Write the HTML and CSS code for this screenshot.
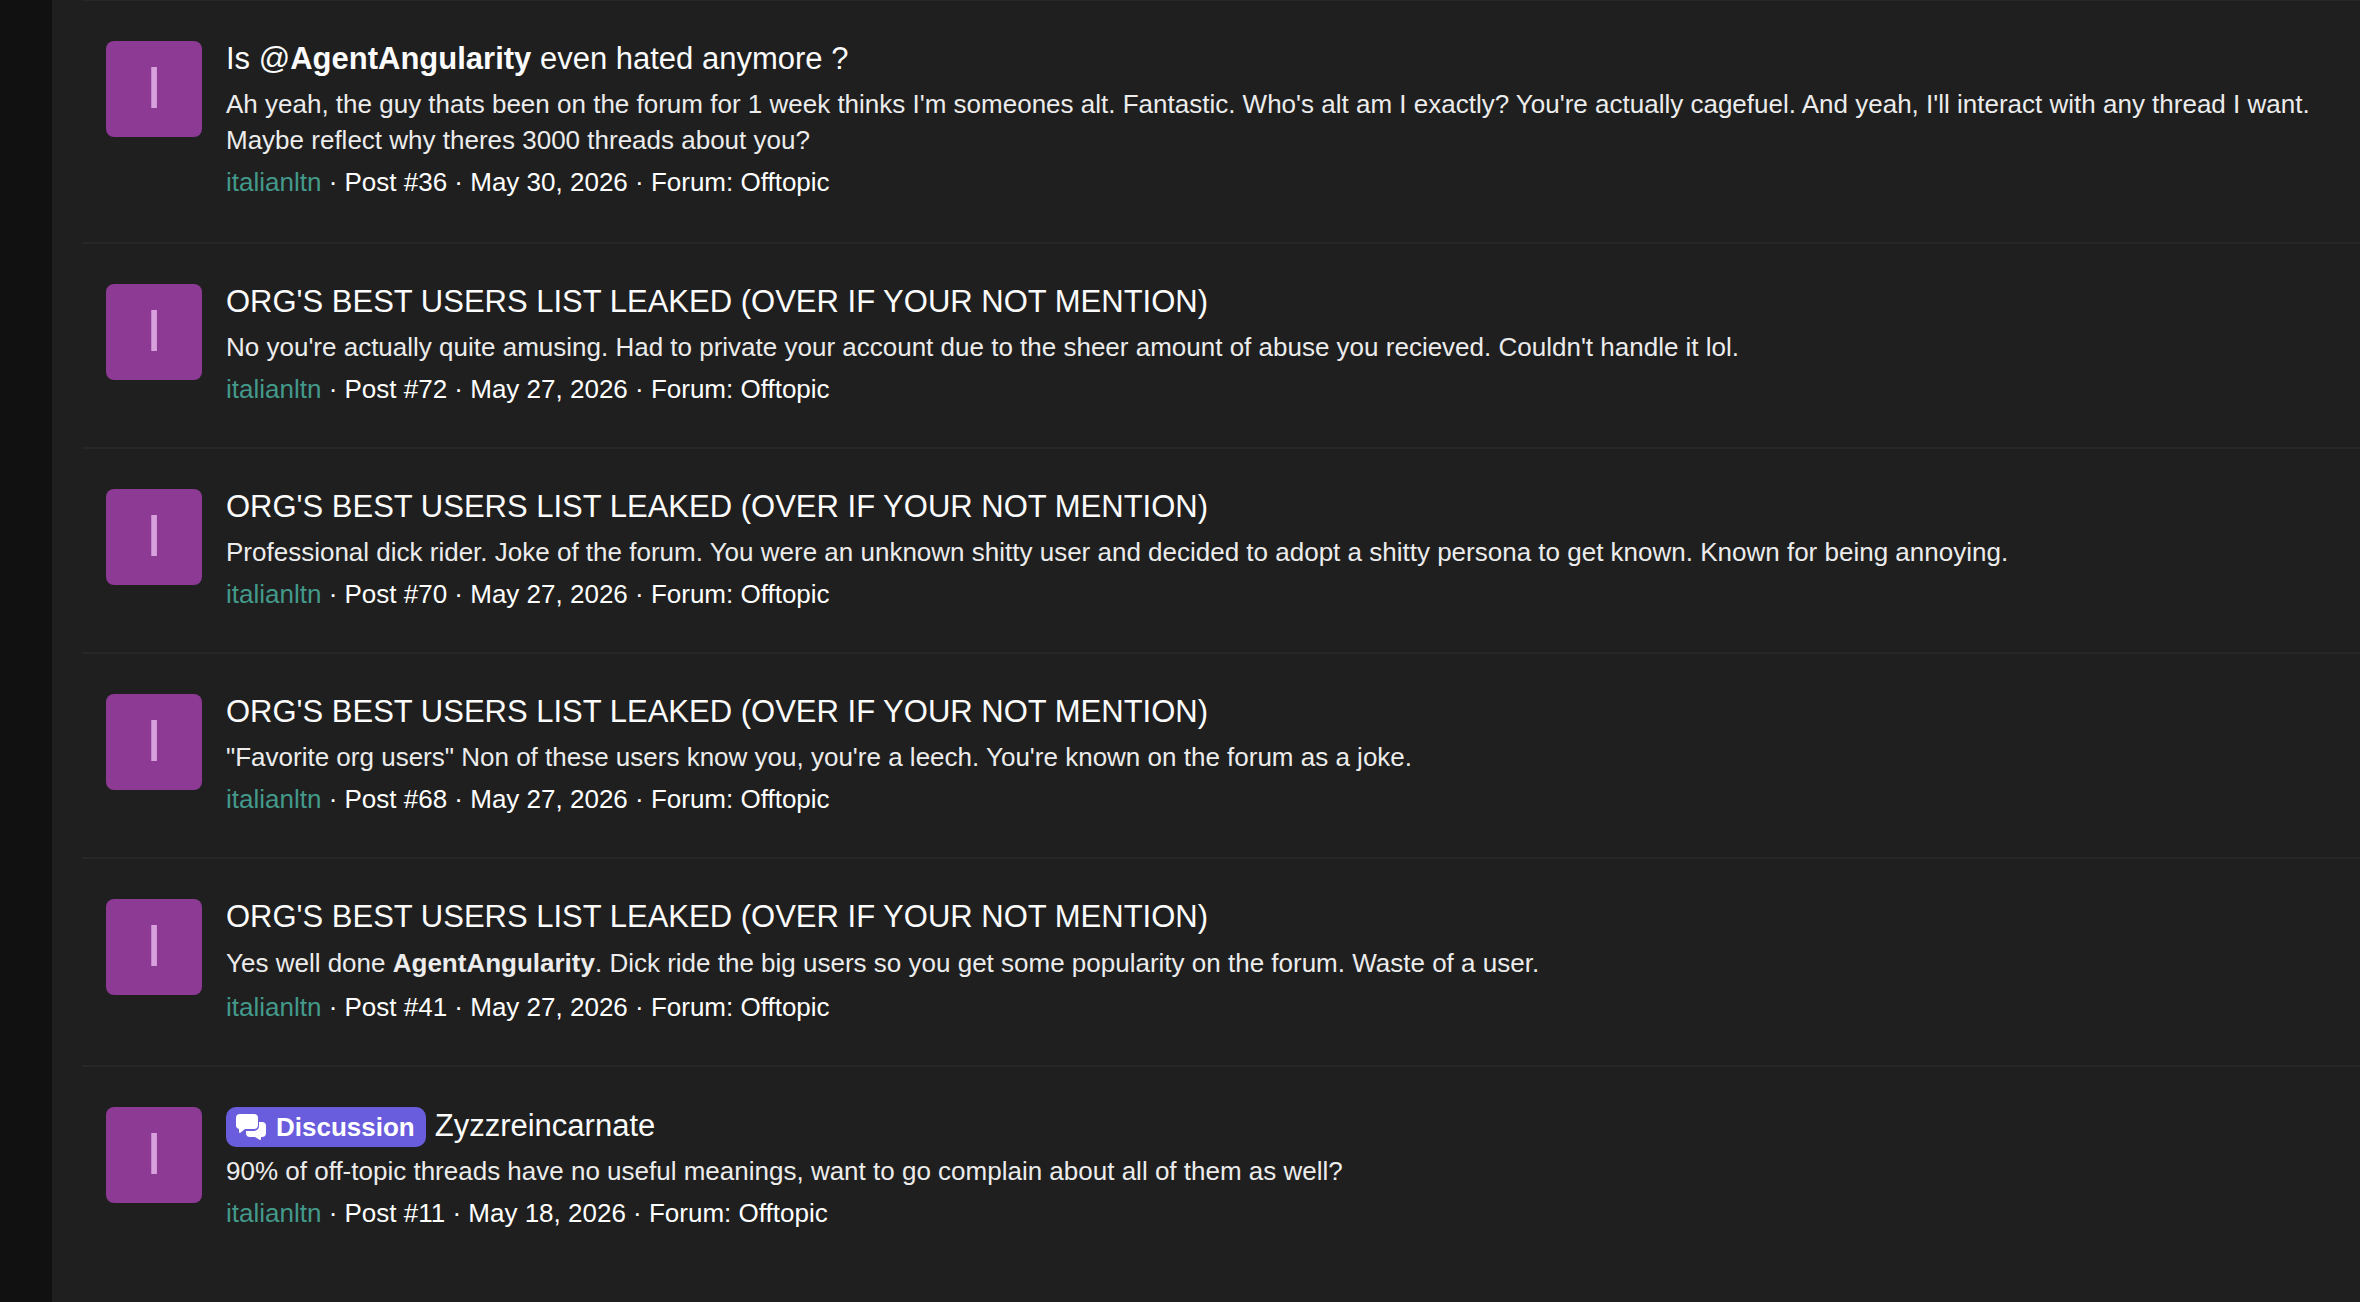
FILE: index.html
```html
<!DOCTYPE html>
<html lang="en">
<head>
  <meta charset="UTF-8">
  <title>Search results</title>
  <meta name="viewport" content="width=device-width, initial-scale=1.0">
  <link rel="stylesheet" href="styles.css">
</head>
<body>

  <main class="panel">
    <ol class="results">

      <li class="result">
        <a class="avatar" href="#">I</a>
        <div class="result-main">
          <h3 class="title"><a href="#">Is @<b>AgentAngularity</b> even hated anymore ?</a></h3>
          <p class="snippet">Ah yeah, the guy thats been on the forum for 1 week thinks I'm someones alt. Fantastic. Who's alt am I exactly? You're actually cagefuel. And yeah, I'll interact with any thread I want. Maybe reflect why theres 3000 threads about you?</p>
          <p class="meta"><a class="username" href="#">italianltn</a> · Post #36 · May 30, 2026 · Forum: <a href="#">Offtopic</a></p>
        </div>
      </li>

      <li class="result">
        <a class="avatar" href="#">I</a>
        <div class="result-main">
          <h3 class="title"><a href="#">ORG'S BEST USERS LIST LEAKED (OVER IF YOUR NOT MENTION)</a></h3>
          <p class="snippet">No you're actually quite amusing. Had to private your account due to the sheer amount of abuse you recieved. Couldn't handle it lol.</p>
          <p class="meta"><a class="username" href="#">italianltn</a> · Post #72 · May 27, 2026 · Forum: <a href="#">Offtopic</a></p>
        </div>
      </li>

      <li class="result">
        <a class="avatar" href="#">I</a>
        <div class="result-main">
          <h3 class="title"><a href="#">ORG'S BEST USERS LIST LEAKED (OVER IF YOUR NOT MENTION)</a></h3>
          <p class="snippet">Professional dick rider. Joke of the forum. You were an unknown shitty user and decided to adopt a shitty persona to get known. Known for being annoying.</p>
          <p class="meta"><a class="username" href="#">italianltn</a> · Post #70 · May 27, 2026 · Forum: <a href="#">Offtopic</a></p>
        </div>
      </li>

      <li class="result">
        <a class="avatar" href="#">I</a>
        <div class="result-main">
          <h3 class="title"><a href="#">ORG'S BEST USERS LIST LEAKED (OVER IF YOUR NOT MENTION)</a></h3>
          <p class="snippet">"Favorite org users" Non of these users know you, you're a leech. You're known on the forum as a joke.</p>
          <p class="meta"><a class="username" href="#">italianltn</a> · Post #68 · May 27, 2026 · Forum: <a href="#">Offtopic</a></p>
        </div>
      </li>

      <li class="result">
        <a class="avatar" href="#">I</a>
        <div class="result-main">
          <h3 class="title"><a href="#">ORG'S BEST USERS LIST LEAKED (OVER IF YOUR NOT MENTION)</a></h3>
          <p class="snippet has-mention">Yes well done <b>AgentAngularity</b>. Dick ride the big users so you get some popularity on the forum. Waste of a user.</p>
          <p class="meta"><a class="username" href="#">italianltn</a> · Post #41 · May 27, 2026 · Forum: <a href="#">Offtopic</a></p>
        </div>
      </li>

      <li class="result">
        <a class="avatar" href="#">I</a>
        <div class="result-main">
          <h3 class="title has-label">
            <a class="label" href="#">
              <svg class="label-icon" viewBox="0 0 30 26" aria-hidden="true">
                <path d="M4 0h14a4 4 0 0 1 4 4v7a4 4 0 0 1-4 4H9l-5 4q-1 0-1-1v-3a4 4 0 0 1-3-4V4a4 4 0 0 1 4-4z"/>
                <path d="M23 8h3a4 4 0 0 1 4 4v7a4 4 0 0 1-4 4h-1v2q0 1-1 1l-5-3h-5a4 4 0 0 1-4-4v-2h8a5 5 0 0 0 5-5z"/>
              </svg>
              <span>Discussion</span>
            </a>
            <a href="#">Zyzzreincarnate</a>
          </h3>
          <p class="snippet">90% of off-topic threads have no useful meanings, want to go complain about all of them as well?</p>
          <p class="meta"><a class="username" href="#">italianltn</a> · Post #11 · May 18, 2026 · Forum: <a href="#">Offtopic</a></p>
        </div>
      </li>

    </ol>
  </main>

</body>
</html>
```

FILE: styles.css
```css
body {
  margin: 0;
  background-color: #111111;
  color: #ffffff;
  font-family: "Helvetica Neue", "Liberation Sans", Arial, sans-serif;
  font-size: 26px;
  line-height: 36px;
}
a {
  color: inherit;
  text-decoration: none;
}
.panel {
  box-sizing: border-box;
  min-height: 100vh;
  margin-left: 52px;
  padding-left: 30px;
  background-color: #1f1f1f;
}
.results {
  list-style: none;
  margin: 0;
  padding: 0;
}
.result {
  display: flex;
  gap: 24px;
  padding: 40px 0 40px 24px;
  border-top: 2px solid #272727;
}
.result:first-child {
  border-top-width: 1px;
  padding-bottom: 42px;
}
.avatar {
  flex: none;
  width: 96px;
  height: 96px;
  border-radius: 8px;
  background-color: #8c3a94;
  color: #d7a1dd;
  font-size: 60px;
  line-height: 94px;
  text-align: center;
}
.result-main {
  flex: 1;
  min-width: 0;
}
.title {
  margin: 0 0 9px;
  font-size: 31px;
  font-weight: 400;
  line-height: 36px;
  color: #fbfbfb;
}
.snippet {
  margin: 0 0 6px;
  color: #ececec;
}
.has-mention {
  line-height: 39px;
}
.meta {
  margin: 0;
}
.username {
  color: #43998a;
}
.has-label {
  display: flex;
  align-items: baseline;
  gap: 9px;
  margin-bottom: 6px;
}
.label {
  display: flex;
  align-items: baseline;
  gap: 10px;
  padding: 2px 11px 2px 10px;
  border-radius: 10px;
  background-color: #6a5ddd;
  color: #ffffff;
  font-size: 26px;
  line-height: 36px;
  font-weight: 700;
}
.label-icon {
  align-self: center;
  width: 30px;
  height: 26px;
  fill: currentColor;
}
```
